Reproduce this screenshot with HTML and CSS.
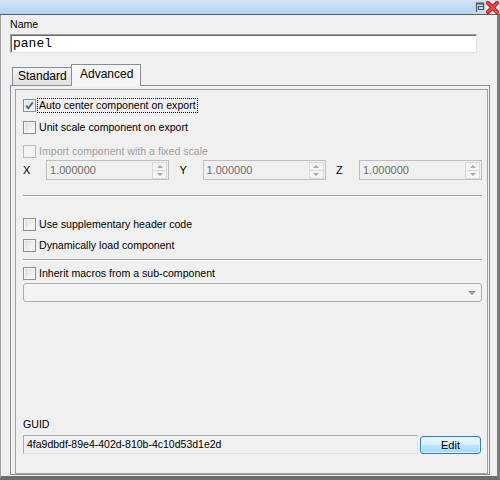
FILE: index.html
```html
<!DOCTYPE html>
<html lang="en">
<head>
<meta charset="UTF-8">
<title>Component properties</title>
<link rel="stylesheet" href="styles.css">
</head>
<body>
<div class="window">
  <div class="titlebar">
    <span class="tb-btn tb-pin">
      <svg width="13" height="12" viewBox="0 0 13 12"><path d="M3.5 11V2.5H10.5V8.5H5.5V5.5H10.5" fill="none" stroke="#4c5866" stroke-width="1.2"/><path d="M3 2.5H11" stroke="#4c5866" stroke-width="2"/></svg>
    </span>
    <span class="tb-btn tb-close">
      <svg width="13" height="13" viewBox="0 0 13 13"><path d="M2 2L11 11M11 2L2 11" stroke="#9b1c1c" stroke-width="4.2" stroke-linecap="square"/><path d="M2 2L11 11M11 2L2 11" stroke="#ea4548" stroke-width="2.6" stroke-linecap="square"/></svg>
    </span>
  </div>
  <div class="content">
    <div class="field-label">Name</div>
    <div class="textbox name-box">panel</div>
    <div class="tabs">
      <div class="tab">Standard</div>
      <div class="tab active">Advanced</div>
    </div>
    <div class="tabpage">
      <div class="page">
        <div class="check-row">
          <span class="check"><svg width="11" height="11" viewBox="0 0 11 11"><path d="M2.2 5.6L4.3 8.2L8.8 2.4" fill="none" stroke="#4a5f97" stroke-width="1.8"/></svg></span>
          <span class="check-text focus">Auto center component on export</span>
        </div>
        <div class="check-row r2">
          <span class="check"></span>
          <span class="check-text">Unit scale component on export</span>
        </div>
        <div class="check-row r3 disabled">
          <span class="check"></span>
          <span class="check-text">Import component with a fixed scale</span>
        </div>
        <div class="xyz-row">
          <div class="xyz">
            <span class="xyz-label">X</span>
            <div class="spin"><span class="spin-value">1.000000</span><span class="spin-btns"><span class="spin-up"></span><span class="spin-down"></span></span></div>
          </div>
          <div class="xyz">
            <span class="xyz-label">Y</span>
            <div class="spin"><span class="spin-value">1.000000</span><span class="spin-btns"><span class="spin-up"></span><span class="spin-down"></span></span></div>
          </div>
          <div class="xyz">
            <span class="xyz-label">Z</span>
            <div class="spin"><span class="spin-value">1.000000</span><span class="spin-btns"><span class="spin-up"></span><span class="spin-down"></span></span></div>
          </div>
        </div>
        <div class="separator sep1"></div>
        <div class="check-row r4">
          <span class="check"></span>
          <span class="check-text">Use supplementary header code</span>
        </div>
        <div class="check-row r5">
          <span class="check"></span>
          <span class="check-text">Dynamically load component</span>
        </div>
        <div class="separator sep2"></div>
        <div class="check-row r6">
          <span class="check"></span>
          <span class="check-text">Inherit macros from a sub-component</span>
        </div>
        <div class="combo"><span class="combo-arrow"></span></div>

        <div class="field-label guid-label">GUID</div>
        <div class="guid-row">
          <div class="textbox guid-box">4fa9dbdf-89e4-402d-810b-4c10d53d1e2d</div>
          <button class="btn">Edit</button>
        </div>
      </div>
    </div>
  </div>
</div>
</body>
</html>
```

FILE: styles.css
```css
html, body { margin: 0; padding: 0; }
body { font-family: "Liberation Sans", Arial, sans-serif; font-size: 10.6px; line-height: 13px; color: #000; background: #f0f0f0; }

.window { width: 500px; height: 480px; display: flex; flex-direction: column; }

.titlebar { height: 14px; border-bottom: 1px solid #5e5e5e; background: linear-gradient(#d3e5f8, #b3d2f3); display: flex; justify-content: flex-end; align-items: center; padding-right: 1px; }
.tb-btn { display: flex; align-items: center; justify-content: center; }
.tb-pin { width: 13px; height: 13px; background: #c4dbf2; }
.tb-close { width: 13px; height: 13px; background: #fdf2f2; }

.content { flex: 1; display: flex; flex-direction: column; border-left: 1px solid #a0a0a0; border-right: 3px solid #7c7c7c; border-bottom: 4px solid #6d6d6d; padding: 3px 7px 1px 9px; min-height: 0; }

.field-label { height: 13px; }

.textbox { box-sizing: border-box; height: 19px; border: 1px solid; white-space: nowrap; overflow: hidden; }
.name-box { width: 467px; margin-top: 3px; background: #fff; border-color: #a0a0a0 #e3e3e3 #e3e3e3 #a0a0a0; box-shadow: inset 1px 1px 0 #696969; font-family: "Liberation Mono", "Courier New", monospace; font-size: 13px; line-height: 17px; padding-left: 2px; }

.tabs { display: flex; align-items: flex-end; height: 22px; margin-top: 11px; margin-bottom: -1px; padding-left: 2px; position: relative; z-index: 1; }
.tab { box-sizing: border-box; height: 18px; width: 60px; margin-bottom: 1px; padding-left: 5px; border: 1px solid #898c95; border-bottom: none; background: linear-gradient(#f2f2f2, #e0e0e0); font-size: 12px; line-height: 17px; }
.tab.active { height: 22px; width: 70px; margin-left: -1px; margin-bottom: 0; padding-left: 8px; background: #f6f6f6; line-height: 19px; }

.tabpage { flex: 1; display: flex; border: 1px solid #898c95; padding: 3px 1px 0 4px; min-height: 0; }
.page { flex: 1; border: 1px solid #a0a0a0; padding: 7px 5px 0 7px; }

.check-row { display: flex; align-items: center; height: 17px; }
.check { box-sizing: border-box; width: 13px; height: 13px; border: 1px solid #8f8f8f; background: linear-gradient(135deg, #dcdcdc, #fdfdfd); box-shadow: inset 0 0 0 1px #f4f4f4; display: flex; align-items: center; justify-content: center; margin-right: 1px; }
.check-text { border: 1px solid transparent; padding: 0 1px; }
.check-text.focus { border: 1px dotted #000; }
.disabled .check { border-color: #bcbcbc; background: #f4f4f4; box-shadow: none; }
.disabled .check-text { color: #a0a0a0; }

.r2 { margin-top: 5px; }
.r3 { margin-top: 7px; }
.r4 { margin-top: 19px; }
.r5 { margin-top: 4px; }
.r6 { margin-top: 4px; }

.xyz-row { display: flex; justify-content: space-between; height: 20px; }
.xyz { display: flex; align-items: center; }
.xyz-label { width: 23px; font-size: 11px; }
.spin { box-sizing: border-box; width: 123px; height: 20px; border: 1px solid #bfbfbf; background: #f0f0f0; display: flex; align-items: center; justify-content: space-between; padding: 0 1px 0 3px; }
.spin-value { color: #6d6d6d; font-size: 11px; }
.spin-btns { display: flex; flex-direction: column; width: 15px; height: 17px; }
.spin-up, .spin-down { flex: 1; box-sizing: border-box; border: 1px solid #d9d9d9; background: #f4f4f4; display: flex; align-items: center; justify-content: center; }
.spin-down { border-top: none; }
.spin-up::after { content: ""; border: 3px solid transparent; border-bottom: 3px solid #a8a8a8; border-top: none; }
.spin-down::after { content: ""; border: 3px solid transparent; border-top: 3px solid #a8a8a8; border-bottom: none; }

.separator { height: 0; border-top: 1px solid #a0a0a0; border-bottom: 1px solid #fff; }
.sep1 { margin-top: 15px; }
.sep2 { margin-top: 5px; }

.combo { box-sizing: border-box; height: 19px; margin-top: 1px; border: 1px solid #adadad; border-radius: 3px; background: #f3f3f3; display: flex; align-items: center; justify-content: flex-end; padding-right: 5px; }
.combo-arrow { border: 4px solid transparent; border-top: 4px solid #9a9a9a; border-bottom: none; margin-top: 1px; }

.guid-label { margin-top: 116px; }
.guid-row { display: flex; align-items: center; gap: 2px; margin-top: 4px; }
.guid-box { width: 395px; background: #f0f0f0; border-color: #acacac #e3e3e3 #e3e3e3 #acacac; padding-left: 3px; font-size: 10.5px; line-height: 17px; }
.btn { box-sizing: border-box; width: 61px; height: 18px; margin-top: 1px; padding: 0; border: 1px solid #3c7fb1; border-radius: 3px; background: linear-gradient(#eaf6fd 0%, #d9f0fc 45%, #bee6fd 50%, #a7d9f5 100%); box-shadow: inset 0 0 0 1px #d2edfb; font-family: "Liberation Sans", Arial, sans-serif; font-size: 11px; line-height: 15px; color: #000; }
```
